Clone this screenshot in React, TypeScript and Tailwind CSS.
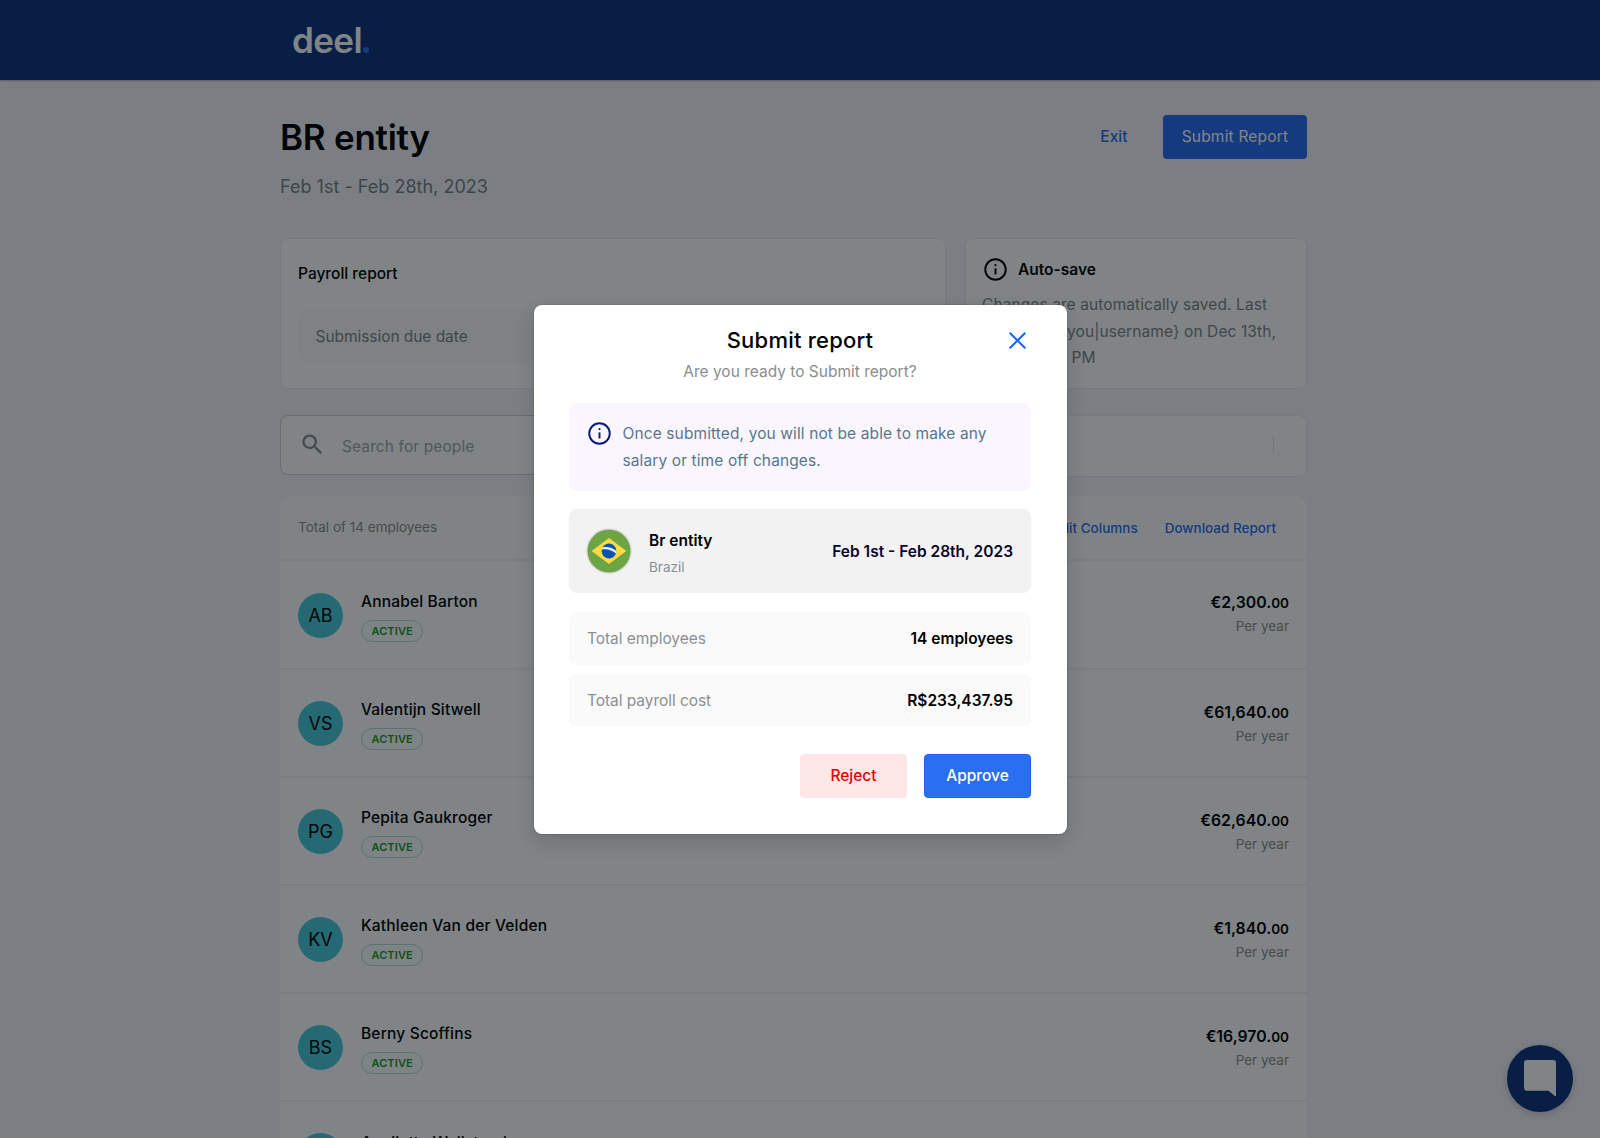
import React from 'react'

interface Employee {
  initials: string
  name: string
  amount: string
}

const employees: Employee[] = [
  { initials: 'AB', name: 'Annabel Barton', amount: '€2,300.' },
  { initials: 'VS', name: 'Valentijn Sitwell', amount: '€61,640.' },
  { initials: 'PG', name: 'Pepita Gaukroger', amount: '€62,640.' },
  { initials: 'KV', name: 'Kathleen Van der Velden', amount: '€1,840.' },
  { initials: 'BS', name: 'Berny Scoffins', amount: '€16,970.' },
  { initials: 'AW', name: 'Annilette Wellstead', amount: '€24,500.' },
]

const InfoIcon: React.FC<{ className?: string }> = ({ className }) => (
  <svg viewBox="0 0 24 24" className={className} fill="none" stroke="currentColor">
    <circle cx="12" cy="12" r="10.7" strokeWidth="2" />
    <path d="M12 10.8v6.4" strokeWidth="2" />
    <circle cx="12" cy="7.4" r="1.15" fill="currentColor" stroke="none" />
  </svg>
)

const BrazilFlag: React.FC = () => (
  <svg viewBox="0 0 44 44" className="w-11 h-11 drop-shadow-[0_0_1px_rgba(0,0,0,0.45)]">
    <circle cx="22" cy="22" r="21.3" fill="#6da544" />
    <path d="M22 9 39.3 22 22 35 4.7 22z" fill="#ffda44" />
    <circle cx="22" cy="22" r="7.4" fill="#0052b4" />
    <path d="M14.7 20.7c5-1.3 10.6.5 14.3 3.9l.4-2.6c-3.8-3.3-9.2-4.7-14-3.6z" fill="#f0f0f0" />
  </svg>
)

const Header: React.FC = () => (
  <header className="h-20 shrink-0 bg-[#11337d] shadow-[0_1px_2px_rgba(0,0,0,0.3)]">
    <div className="flex pl-[292px] pt-[18px]">
      <span className="text-[35px] leading-[44px] font-semibold tracking-[-0.6px] text-white">deel</span>
      <span className="w-[6.5px] h-[6.5px] mt-[28.5px] ml-[0.5px] rounded-full bg-[#2b6bf0]" />
    </div>
  </header>
)

const EmployeeRow: React.FC<{ employee: Employee }> = ({ employee }) => (
  <div className="group h-[108.1px] first:h-[109px] shrink-0 flex items-center border-b-2 border-[#f3f3f5] px-[18px] pt-[2px] first:pt-[3px]">
    <div className="w-[45px] h-[45px] mb-[2px] rounded-full bg-[#47c9da] flex items-center justify-center text-[18px] text-black">
      {employee.initials}
    </div>
    <div className="ml-[18px] pt-[0.2px] flex flex-col items-start">
      <span className="text-[15.5px] leading-6 font-medium tracking-[0.18px] text-black">{employee.name}</span>
      <span className="mt-[6px] h-[22px] px-[9.5px] rounded-full border border-[#b4dcce] bg-[#fafffc] text-[11px] leading-[20.5px] font-semibold tracking-[0.1px] text-[#1b9a1f]">
        ACTIVE
      </span>
    </div>
    <div className="ml-auto group-first:pb-[3px] flex flex-col items-end">
      <span className="text-[15.8px] leading-[23px] font-semibold text-black">
        {employee.amount}
        <span className="text-[13.5px]">00</span>
      </span>
      <span className="text-[13.5px] leading-[23px] text-[#8c8c8c]">Per year</span>
    </div>
  </div>
)

const Page: React.FC = () => (
  <div className="flex flex-col h-[1138px] overflow-hidden bg-[#f5f5fa]">
    <Header />
    <main className="w-[1027px] ml-[280px] flex flex-col">
      <div className="flex justify-between pt-[34px]">
        <div>
          <h1 className="text-[35px] leading-[46px] font-semibold tracking-[-0.25px] text-black">BR entity</h1>
          <p className="mt-[13px] text-[18px] leading-[27px] tracking-[0.02px] text-[#7a8085]">Feb 1st - Feb 28th, 2023</p>
        </div>
        <div className="flex items-center h-[45px] text-[15.5px]">
          <button className="pt-px font-medium text-[#2b6bf0] mr-[35.5px]">Exit</button>
          <button className="w-[144px] h-11 mt-px rounded bg-[#2b6bf0] tracking-[0.2px] text-white">Submit Report</button>
        </div>
      </div>

      <div className="flex mt-[38px] h-[151px]">
        <section className="w-[666px] rounded-lg border border-[#ebebf6] bg-white px-[17px] pt-[23px]">
          <h2 className="text-[15.5px] leading-6 font-medium text-black">Payroll report</h2>
          <div className="mt-[23px] h-[53px] rounded-lg bg-[#fbfbfb] flex items-center px-[17.5px] pt-[2px] text-[15.5px] tracking-[-0.05px] text-[#7f8488]">
            Submission due date
          </div>
        </section>
        <section className="ml-[19px] w-[342px] rounded-lg border border-[#ebebf6] bg-white px-4 pt-[18px]">
          <div className="flex items-center text-black">
            <InfoIcon className="w-[23px] h-[23px] ml-[2px]" />
            <h2 className="ml-[11px] pt-px text-[15.5px] leading-6 font-semibold">Auto-save</h2>
          </div>
          <p className="mt-[10px] text-[15.5px] leading-[26.7px] tracking-[0.09px] text-[#7f8488] whitespace-nowrap">
            Changes are automatically saved. Last
            <br />
            update by {'{you|username}'} on Dec 13th,
            <br />
            2022 at 1:11 PM
          </p>
        </section>
      </div>

      <div className="flex mt-[26px] h-[62px]">
        <div className="w-[560px] h-[60px] rounded-lg border border-[#cfcfd2] bg-white flex items-center">
          <svg viewBox="0 0 24 24" className="w-[27px] h-[27px] ml-[18px] mb-px text-[#828890]" fill="currentColor">
            <path d="M15.5 14h-.79l-.28-.27A6.471 6.471 0 0 0 16 9.5 6.5 6.5 0 1 0 9.5 16c1.61 0 3.09-.59 4.23-1.57l.27.28v.79l5 4.99L20.49 19l-4.99-5zm-6 0C7.01 14 5 11.99 5 9.5S7.01 5 9.5 5 14 7.01 14 9.5 11.99 14 9.5 14z" />
          </svg>
          <span className="ml-[16px] pt-[3px] text-[15.5px] tracking-[0.1px] text-[#a3a6a9]">Search for people</span>
        </div>
        <div className="ml-5 flex-1 rounded-lg border border-[#ebebf6] bg-white flex items-center justify-end pr-8">
          <span className="w-px h-[18px] mb-[2px] bg-[#e4e4e8]" />
        </div>
      </div>

      <section className="mt-[19px] rounded-t-xl bg-white flex flex-col">
        <div className="h-[65px] shrink-0 flex items-center border-b-2 border-[#f3f3f5] bg-[#fdfdfd] rounded-t-xl pl-[18px] pr-[31px] text-[13.5px]">
          <span className="text-[#8c8c8c] pb-px">Total of 14 employees</span>
          <span className="ml-auto pt-px font-medium text-[#2b6bf0]">Edit Columns</span>
          <span className="ml-[27px] pt-px font-medium text-[#2b6bf0]">Download Report</span>
        </div>
        <div className="flex flex-col">
          {employees.map((employee) => (
            <EmployeeRow key={employee.initials} employee={employee} />
          ))}
        </div>
      </section>
    </main>
  </div>
)

const SummaryRow: React.FC<{ label: string; value: string }> = ({ label, value }) => (
  <div className="h-[53px] rounded-lg bg-[#fafafa] flex items-center justify-between px-[18px] pt-px text-[15.5px]">
    <span className="tracking-[-0.05px] text-[#8c8f92]">{label}</span>
    <span className="font-semibold text-black">{value}</span>
  </div>
)

const SubmitModal: React.FC = () => (
  <div className="relative w-[533px] h-[529px] rounded-lg bg-white pl-[35.5px] pr-[35.5px] pt-[21px] shadow-[0_8px_20px_rgba(0,0,0,0.14),0_0_2px_rgba(0,0,0,0.3)]">
    <button className="absolute right-[40.5px] top-[27px] text-[#1568f5]" aria-label="Close">
      <svg viewBox="0 0 17 17" className="w-[17px] h-[17px]" stroke="currentColor" strokeWidth="2" strokeLinecap="round">
        <path d="M1.2 1.2l14.6 14.6M15.8 1.2L1.2 15.8" />
      </svg>
    </button>
    <h2 className="text-center text-[22px] leading-7 font-medium tracking-[0.22px] text-black">Submit report</h2>
    <p className="mt-[6px] text-center text-[15.5px] leading-6 text-[#8a8d90]">Are you ready to Submit report?</p>

    <div className="mt-[19px] h-[88px] rounded-lg bg-[#f9f6ff] flex pl-[19px] pt-[18px]">
      <InfoIcon className="w-[23px] h-[23px] mt-[1.5px] text-[#0a1b70]" />
      <p className="ml-[11.5px] pt-[0.4px] text-[15.5px] leading-[26.7px] tracking-[0.11px] text-[#5b7689] whitespace-nowrap">
        Once submitted, you will not be able to make any
        <br />
        salary or time off changes.
      </p>
    </div>

    <div className="mt-[18px] h-[84px] rounded-lg bg-[#f2f2f2] flex items-center px-[18px]">
      <BrazilFlag />
      <div className="ml-[18px] pt-[7px] flex flex-col">
        <span className="text-[15.5px] leading-6 font-semibold text-black">Br entity</span>
        <span className="mt-[2px] text-[13.5px] leading-6 text-[#8c8f92]">Brazil</span>
      </div>
      <span className="ml-auto pt-[2px] text-[15.5px] font-semibold text-[#08052b]">Feb 1st - Feb 28th, 2023</span>
    </div>

    <div className="mt-[19px] flex flex-col gap-[9px]">
      <SummaryRow label="Total employees" value="14 employees" />
      <SummaryRow label="Total payroll cost" value="R$233,437.95" />
    </div>

    <div className="mt-[27px] flex justify-end gap-[17px] text-[15.5px]">
      <button className="w-[107px] h-11 pt-px rounded bg-[#fde6e6] font-medium text-[#e60000]">Reject</button>
      <button className="w-[107px] h-11 pt-px rounded bg-[#2a6ff0] border border-[#1f63ea] font-medium text-white">
        Approve
      </button>
    </div>
  </div>
)

export default function App() {
  return (
    <div className="relative w-[1600px] h-[1138px] overflow-hidden font-['Inter',sans-serif] antialiased">
      <Page />

      {/* Chat launcher */}
      <div className="absolute left-[1506.5px] top-[1045px] w-[66.5px] h-[66.5px] rounded-full bg-[#11337d] shadow-[0_2px_8px_rgba(0,0,0,0.2)] flex items-center justify-center">
        <svg viewBox="0 0 32 36" className="w-8 h-9" fill="#ffffff">
          <path d="M3 0h26a3 3 0 0 1 3 3v33h-1.2L24.5 30.7H3a3 3 0 0 1-3-3V3a3 3 0 0 1 3-3z" />
        </svg>
      </div>

      {/* Backdrop and dialog */}
      <div className="absolute inset-0 bg-[#01090d]/50 flex justify-center items-start pt-[304.5px]">
        <SubmitModal />
      </div>
    </div>
  )
}
